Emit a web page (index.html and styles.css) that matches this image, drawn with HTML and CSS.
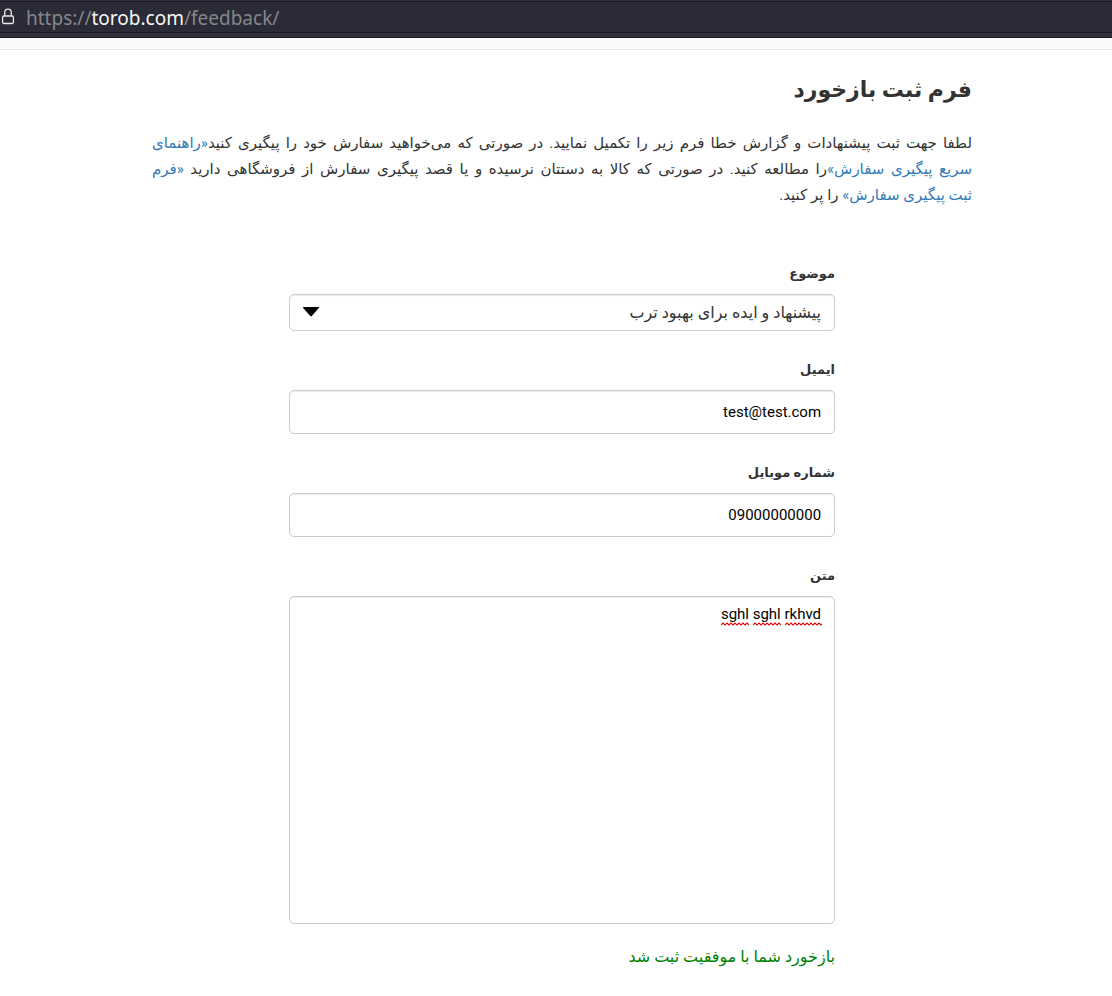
FILE: index.html
```html
<!DOCTYPE html>
<html lang="fa" dir="rtl">
<head>
<meta charset="utf-8">
<meta name="viewport" content="width=device-width, initial-scale=1">
<title>فرم ثبت بازخورد</title>
<link rel="stylesheet" href="styles.css">
</head>
<body>
<header class="browser-bar" dir="ltr">
  <div class="address">
    <svg class="lock" width="16" height="20" viewBox="0 0 16 20" aria-hidden="true"><path d="M4.7 9V5.4a3.3 3.3 0 0 1 6.6 0V9M3.8 9h8.4a1.2 1.2 0 0 1 1.2 1.2v5.1a1.2 1.2 0 0 1-1.2 1.2H3.8a1.2 1.2 0 0 1-1.2-1.2v-5.1A1.2 1.2 0 0 1 3.8 9z" fill="none" stroke="#e8e8e6" stroke-width="1.3"/></svg>
    <span class="url">https://<span class="host">torob.com</span>/feedback/</span>
  </div>
</header>
<div class="site-strip"></div>
<main class="page">
  <h1 class="title">فرم ثبت بازخورد</h1>
  <p class="intro">
    <span class="line">لطفا جهت ثبت پیشنهادات و گزارش خطا فرم زیر را تکمیل نمایید. در صورتی که می‌خواهید سفارش خود را پیگیری کنید<a href="#guide">«راهنمای</a></span>
    <span class="line"><a href="#guide">سریع پیگیری سفارش»</a>را مطالعه کنید. در صورتی که کالا به دستتان نرسیده و یا قصد پیگیری سفارش از فروشگاهی دارید <a href="#track">«فرم</a></span>
    <span class="line last"><a href="#track">ثبت پیگیری سفارش»</a> را پر کنید.</span>
  </p>
  <form class="form">
    <div class="field">
      <label for="subject">موضوع</label>
      <div class="wrap">
        <select id="subject" class="control select"><option>پیشنهاد و ایده برای بهبود ترب</option></select>
        <svg class="caret" width="18" height="10" viewBox="0 0 18 10" aria-hidden="true"><path d="M1.5 0h15q1 0 .3 1L10 8.8q-1 1-2 0L1.2 1q-.7-1 .3-1z"/></svg>
      </div>
    </div>
    <div class="field">
      <label for="email">ایمیل</label>
      <input id="email" class="control" type="text" value="test@test.com">
    </div>
    <div class="field">
      <label for="mobile">شماره موبایل</label>
      <input id="mobile" class="control" type="text" value="09000000000">
    </div>
    <div class="field">
      <label for="message">متن</label>
      <div class="wrap">
        <textarea id="message" class="control message" spellcheck="false">sghl sghl rkhvd</textarea>
        <svg class="squiggles" width="101" height="4" viewBox="0 0 101 4" aria-hidden="true">
          <defs><pattern id="wave" width="4" height="4" patternUnits="userSpaceOnUse"><path d="M-1 2L0 3L2 1L4 3L5 2" fill="none" stroke="#e00000" stroke-width="1.2"/></pattern></defs>
          <path d="M0 0h28v4H0zM32 0h28v4H32zM64 0h37v4H64z" fill="url(#wave)"/>
        </svg>
      </div>
    </div>
    <p class="success" role="status">بازخورد شما با موفقیت ثبت شد</p>
  </form>
</main>
</body>
</html>
```
FILE: styles.css
```css
* { box-sizing: border-box; }
body {
  margin: 0;
  background: #fff;
  color: #333;
  font: 16px/26px Roboto, "DejaVu Sans", sans-serif;
}
.browser-bar {
  height: 38px;
  padding: 1px 0 4px;
  background: #32313c;
  border-bottom: 1px solid #1b1a24;
}
.address {
  display: flex;
  align-items: center;
  gap: 10px;
  height: 32px;
  background: #2a2b37;
  border-top: 1px solid #1b1a24;
  border-bottom: 1px solid #1b1a24;
}
.lock { flex: none; }
.url {
  padding-top: 2px;
  color: #85868a;
  font: 19px/28px "Noto Sans", sans-serif;
}
.host { color: #f8f8f2; }
.site-strip {
  height: 12px;
  background: #f9fafc;
  border-bottom: 1px solid #e8e8e8;
}
.page {
  width: calc(100% - 280px);
  max-width: 820px;
  min-width: 300px;
  margin: 0 auto;
  padding-top: 20px;
}
@media (min-width: 1100px) {
  .page { margin-right: 140px; }
}
.title {
  margin: 0;
  font-size: 22px;
  line-height: 40px;
  font-weight: 700;
}
.intro {
  margin: 20px 0 53px;
  font-size: 15px;
}
.line {
  display: block;
  text-align: justify;
  text-align-last: justify;
}
.last { text-align-last: right; }
a { color: #337ab7; text-decoration: none; }
.form {
  width: 66.6%;
  margin: 0 auto;
}
.field { margin-bottom: 26px; }
.field:last-of-type { margin-bottom: 20px; }
label {
  display: block;
  margin-bottom: 7px;
  font-size: 13px;
  font-weight: 700;
}
.wrap { position: relative; }
.control {
  display: block;
  width: 100%;
  height: 44px;
  padding: 0 13px;
  border: 1px solid #ccc;
  border-radius: 5px;
  background: #fff;
  box-shadow: inset 0 1px 1px rgba(0, 0, 0, .075);
  color: #000;
  font: inherit;
  font-size: 15px;
}
.select {
  height: 37px;
  appearance: none;
  color: #333;
  font-size: 16px;
}
.caret {
  position: absolute;
  left: 13px;
  top: 13px;
}
.message {
  height: 328px;
  padding: 4px 13px;
  resize: none;
}
.squiggles {
  position: absolute;
  right: 13px;
  top: 26px;
}
.success {
  margin: 0;
  color: green;
}
```
